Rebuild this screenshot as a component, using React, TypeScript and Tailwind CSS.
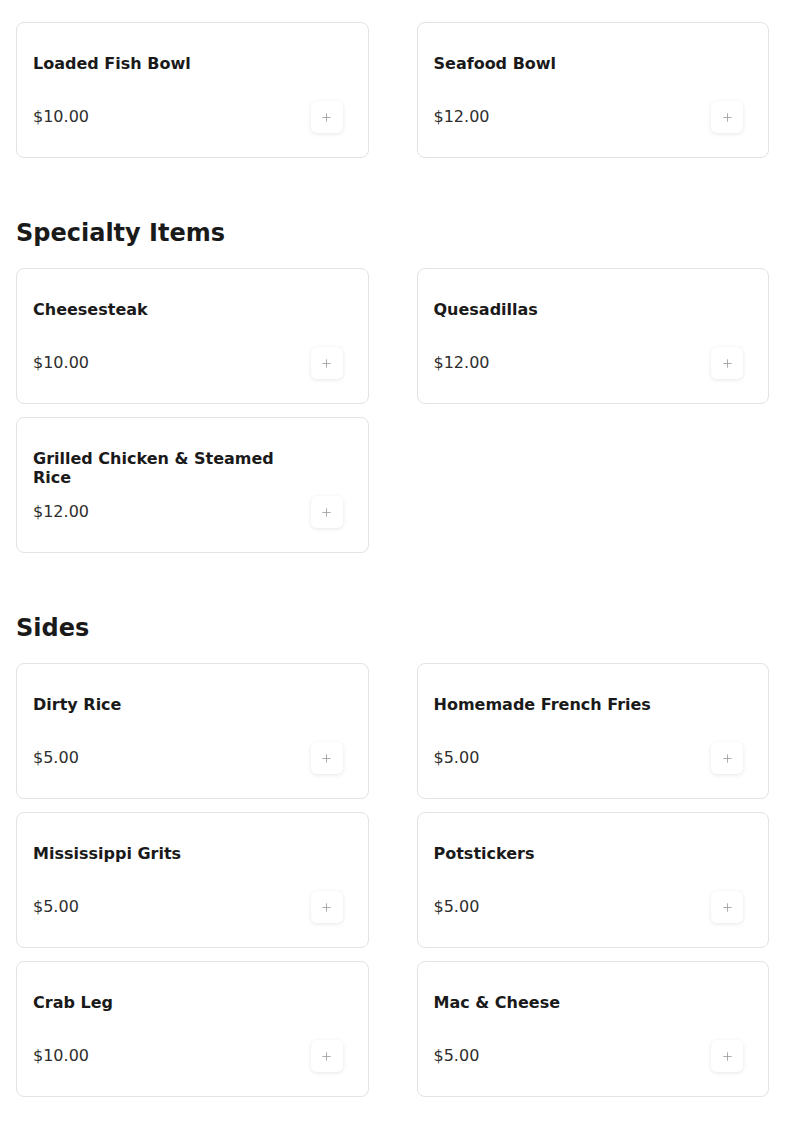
import { Plus } from "lucide-react";

type Item = { name: string; price: number };

const sections: { title: string; items: Item[] }[] = [
  {
    title: "Specialty Bowls",
    items: [
      { name: "Loaded Fish Bowl", price: 10 },
      { name: "Seafood Bowl", price: 12 },
    ],
  },
  {
    title: "Specialty Items",
    items: [
      { name: "Cheesesteak", price: 10 },
      { name: "Quesadillas", price: 12 },
      { name: "Grilled Chicken & Steamed Rice", price: 12 },
    ],
  },
  {
    title: "Sides",
    items: [
      { name: "Dirty Rice", price: 5 },
      { name: "Homemade French Fries", price: 5 },
      { name: "Mississippi Grits", price: 5 },
      { name: "Potstickers", price: 5 },
      { name: "Crab Leg", price: 10 },
      { name: "Mac & Cheese", price: 5 },
    ],
  },
];

function MenuCard({ item }: { item: Item }) {
  return (
    <div className="flex h-[136px] flex-col rounded-lg border border-[#e3e3e3] bg-white px-4">
      <h3 className="mt-[31px] max-w-[262px] text-base font-bold leading-[19px] text-[#1a1a1a]">
        {item.name}
      </h3>
      <div className="mb-[24px] mt-auto flex items-center justify-between pr-[9px]">
        <span className="text-base leading-6 text-[#2e2e2e]">
          ${item.price.toFixed(2)}
        </span>
        <button className="flex h-8 w-8 items-center justify-center rounded-md bg-white text-[#9a9a9a] shadow-[0_1px_4px_rgba(0,0,0,0.1)]">
          <Plus size={13} strokeWidth={1.5} />
        </button>
      </div>
    </div>
  );
}

export default function App() {
  return (
    <div
      className="min-h-screen overflow-hidden bg-white"
      style={{ fontFamily: '"DejaVu Sans", "Noto Sans", sans-serif' }}
    >
      {/* page is scrolled: the first heading sits mostly above the fold */}
      <main className="-mt-[29px] px-4 pb-10">
        {sections.map((section, i) => (
          <section key={section.title} className={i > 0 ? "mt-[59px]" : ""}>
            <h2 className="mb-[19px] text-2xl font-bold leading-8 text-[#1a1a1a]">
              {section.title}
            </h2>
            <div className="grid grid-cols-2 gap-x-12 gap-y-[13px]">
              {section.items.map((item) => (
                <MenuCard key={item.name} item={item} />
              ))}
            </div>
          </section>
        ))}
      </main>
    </div>
  );
}
